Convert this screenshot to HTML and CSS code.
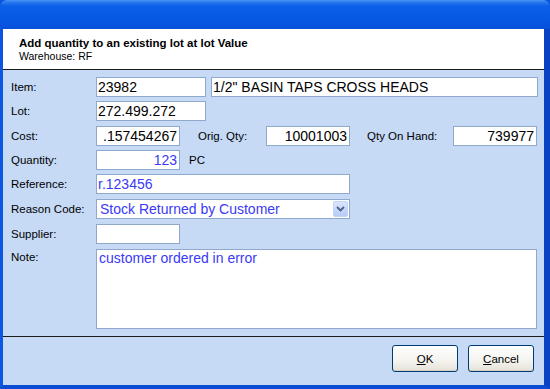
FILE: index.html
```html
<!DOCTYPE html>
<html lang="en">
<head>
  <meta charset="UTF-8" />
  <title>Add quantity to an existing lot</title>
  <link rel="stylesheet" href="styles.css">
</head>
<body>
  <div class="window">
    <div class="titlebar"></div>
    <div class="frame">
      <div class="client">
        <!-- header -->
        <div class="header">
          <div class="header-title">Add quantity to an existing lot at lot Value</div>
          <div class="header-sub">Warehouse: RF</div>
        </div>

        <!-- form -->
        <div class="form">
          <label class="lbl">Item:</label>
          <div class="row">
            <input class="field w-item" type="text" value="23982">
            <input class="field w-desc" type="text" value="1/2&quot; BASIN TAPS CROSS HEADS">
          </div>

          <label class="lbl">Lot:</label>
          <div class="row">
            <input class="field w-item" type="text" value="272.499.272">
          </div>

          <label class="lbl">Cost:</label>
          <div class="row">
            <input class="field w-num num" type="text" value=".157454267">
            <label class="lbl-inline lbl-orig">Orig. Qty:</label>
            <input class="field w-num num" type="text" value="10001003">
            <label class="lbl-inline lbl-hand">Qty On Hand:</label>
            <input class="field w-num num" type="text" value="739977">
          </div>

          <label class="lbl">Quantity:</label>
          <div class="row">
            <input class="field w-num num blue" type="text" value="123">
            <span class="unit">PC</span>
          </div>

          <label class="lbl">Reference:</label>
          <div class="row">
            <input class="field w-ref blue" type="text" value="r.123456">
          </div>

          <label class="lbl">Reason Code:</label>
          <div class="row">
            <div class="combo w-ref">
              <span class="combo-text">Stock Returned by Customer</span>
              <span class="combo-btn">
                <svg width="9" height="6" viewBox="0 0 9 6"><path d="M1 1 L4.5 4.5 L8 1" fill="none" stroke="#4d6185" stroke-width="1.8"/></svg>
              </span>
            </div>
          </div>

          <label class="lbl">Supplier:</label>
          <div class="row">
            <input class="field w-num" type="text" value="">
          </div>

          <label class="lbl lbl-top">Note:</label>
          <div class="row row-top">
            <textarea class="field note blue">customer ordered in error</textarea>
          </div>
        </div>

        <!-- buttons -->
        <div class="footer">
          <button class="btn" type="button"><u>O</u>K</button>
          <button class="btn" type="button"><u>C</u>ancel</button>
        </div>
      </div>
    </div>
  </div>
</body>
</html>
```

FILE: styles.css
```css
:root {
  --frame: #0a55e0;
  --frame-dark: #0a42c4;
  --panel: #c6daf6;
  --field-border: #8fa8cc;
  --blue-text: #3a3af5;
}
html, body { margin: 0; padding: 0; }
body {
  width: 550px;
  height: 389px;
  overflow: hidden;
  font-family: "Liberation Sans", Arial, sans-serif;
  color: #000;
}
.window {
  width: 550px;
  height: 389px;
  display: flex;
  flex-direction: column;
  background: var(--frame);
}
.titlebar {
  height: 29px;
  flex: none;
  border-radius: 7px 7px 0 0;
  background: linear-gradient(to bottom, #4a96f6 0, #2c7bee 2px, #0c5fe6 6px, #0659e4 18px, #0553df 26px, #0a4fd6 29px);
}
.frame {
  flex: 1;
  display: flex;
  border-left: 3px solid #0b57e2;
  border-right: 6px solid var(--frame-dark);
  border-bottom: 4px solid #0a4cd4;
  min-height: 0;
}
.client {
  flex: 1;
  display: flex;
  flex-direction: column;
  background: var(--panel);
}

/* header */
.header {
  height: 41px;
  box-sizing: border-box;
  background: #fff;
  border-bottom: 1px solid #1c1c1c;
  padding: 7px 0 0 16px;
}
.header-title {
  font-size: 11.5px;
  line-height: 14px;
  font-weight: bold;
}
.header-sub {
  font-size: 10.5px;
  line-height: 12px;
}

/* form */
.form {
  height: 266px;
  box-sizing: border-box;
  padding: 7px 0 7px 8px;
  display: grid;
  grid-template-columns: 85px 1fr;
  grid-template-rows: 24px 25px 24px 24px 25px 25px 25px 80px;
}
.lbl {
  font-size: 11.5px;
  line-height: 20px;
  height: 20px;
  white-space: nowrap;
}
.lbl-top { line-height: 14px; padding-top: 1px; }
.row {
  display: flex;
  align-items: flex-start;
}
.field {
  box-sizing: border-box;
  height: 20px;
  margin: 0;
  border: 1px solid var(--field-border);
  background: #fff;
  font-family: "Liberation Sans", Arial, sans-serif;
  font-size: 14px;
  color: #000;
  padding: 0 2px 0 1px;
  outline: none;
}
.num { text-align: right; padding-right: 2px; }
.blue { color: var(--blue-text); }
.w-item { width: 110px; }
.w-desc { width: 327px; margin-left: 5px; }
.w-num { width: 84px; }
.w-ref { width: 254px; }
.lbl-inline {
  font-size: 11.5px;
  line-height: 20px;
  white-space: nowrap;
}
.lbl-orig { margin-left: 18px; width: 68px; }
.lbl-hand { margin-left: 17px; width: 86px; }
.unit {
  font-size: 11.5px;
  line-height: 20px;
  margin-left: 9px;
}
.combo {
  box-sizing: border-box;
  height: 20px;
  border: 1px solid var(--field-border);
  background: #fff;
  display: flex;
  align-items: center;
  justify-content: space-between;
  padding: 1px;
}
.combo-text {
  font-size: 14px;
  color: var(--blue-text);
  padding-left: 2px;
}
.combo-btn {
  width: 15px;
  height: 16px;
  box-sizing: border-box;
  border: 1px solid #c3d4f7;
  border-radius: 2px;
  background: linear-gradient(to bottom, #dbe6fc, #b6cbf6);
  display: flex;
  align-items: center;
  justify-content: center;
}
.note {
  width: 441px;
  height: 80px;
  resize: none;
  line-height: 17px;
  padding: 0 2px;
}

/* footer */
.footer {
  flex: 1;
  border-top: 1px solid #1c1c1c;
  display: flex;
  justify-content: flex-end;
  align-items: flex-start;
  gap: 10px;
  padding: 8px 10px 0 0;
}
.btn {
  width: 66px;
  height: 27px;
  box-sizing: border-box;
  border: 1px solid #003c74;
  border-radius: 3px;
  background: linear-gradient(to bottom, #ffffff 0%, #f4f3ee 60%, #e4e1d7 100%);
  font-family: "Liberation Sans", Arial, sans-serif;
  font-size: 11.5px;
  font-weight: normal;
  color: #000;
  padding: 0;
  box-shadow: inset 0 -1px 0 #d6d0c5;
}
```
